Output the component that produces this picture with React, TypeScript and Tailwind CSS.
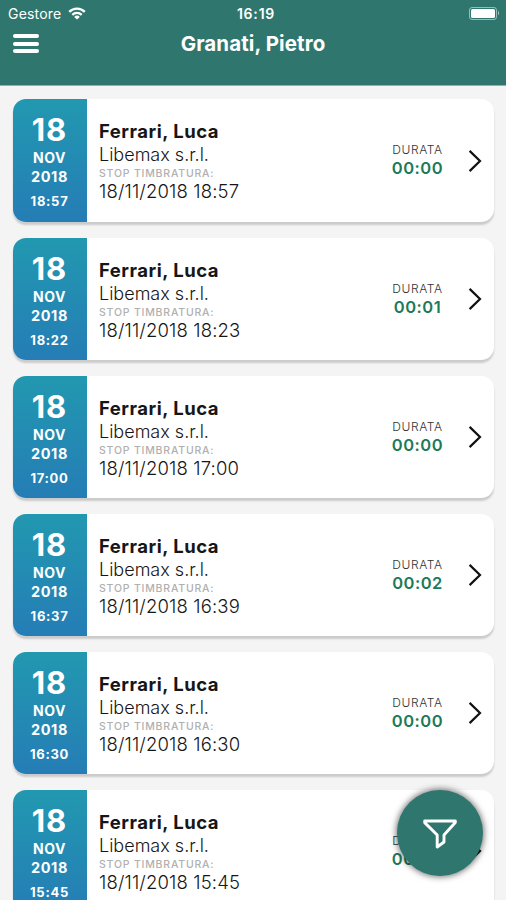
type Stamp = {
  day: string;
  month: string;
  year: string;
  start: string;
  name: string;
  company: string;
  stop: string;
  duration: string;
};

const base = {
  day: "18",
  month: "NOV",
  year: "2018",
  name: "Ferrari, Luca",
  company: "Libemax s.r.l."
};

const stamps: Stamp[] = [
  { ...base, start: "18:57", stop: "18/11/2018 18:57", duration: "00:00" },
  { ...base, start: "18:22", stop: "18/11/2018 18:23", duration: "00:01" },
  { ...base, start: "17:00", stop: "18/11/2018 17:00", duration: "00:00" },
  { ...base, start: "16:37", stop: "18/11/2018 16:39", duration: "00:02" },
  { ...base, start: "16:30", stop: "18/11/2018 16:30", duration: "00:00" },
  { ...base, start: "15:45", stop: "18/11/2018 15:45", duration: "00:00" }
];

function WifiIcon() {
  return (
    <svg width="18" height="13" viewBox="0 0 18 13" fill="none" stroke="white" strokeWidth="2.3">
      <path d="M1.2 4.9a11 11 0 0 1 15.6 0" />
      <path d="M4.3 7.9a6.7 6.7 0 0 1 9.4 0" />
      <path d="M9 12.6 6.2 9.9a4 4 0 0 1 5.6 0Z" fill="white" stroke="none" />
    </svg>
  );
}

function Battery() {
  return (
    <div className="flex items-center gap-px">
      <div className="h-[13px] w-[28px] rounded-[3px] border border-white/50 p-px">
        <div className="h-full w-full rounded-[1.5px] bg-white" />
      </div>
      <div className="h-1 w-[1.5px] rounded-r bg-white/50" />
    </div>
  );
}

function Header() {
  return (
    <header className="h-[86px] shrink-0 border-b border-[#8fb0ab] bg-[#2f776e] text-white">
      <div className="grid h-[26px] grid-cols-3 items-center px-[7px]">
        <div className="flex items-center gap-[7px] pl-px">
          <span className="text-[14px] tracking-[0.2px]">Gestore</span>
          <WifiIcon />
        </div>
        <span className="pl-[6px] text-center text-[14px] font-semibold tracking-[0.8px]">16:19</span>
        <div className="flex justify-end">
          <Battery />
        </div>
      </div>
      <div className="grid h-[36px] grid-cols-[40px_1fr_40px] items-center px-[13px]">
        <button aria-label="Menu" className="-mt-px flex w-[26px] flex-col gap-[3.5px]">
          <span className="h-1 rounded-full bg-white" />
          <span className="h-1 rounded-full bg-white" />
          <span className="h-1 rounded-full bg-white" />
        </button>
        <h1 className="text-center text-[20.5px] font-bold tracking-[0.1px]">Granati, Pietro</h1>
      </div>
    </header>
  );
}

function StampCard({ stamp }: { stamp: Stamp }) {
  return (
    <article className="flex h-[122.3px] shrink-0 overflow-hidden rounded-[13px] bg-white shadow-[0_3px_2px_rgba(0,0,0,0.17)]">
      <div className="flex w-[74px] flex-col items-center bg-gradient-to-b from-[#2298b0] to-[#257db5] pt-[16px] pr-px font-bold text-white">
        <span className="text-[31px] leading-[30px] tracking-[1px]">{stamp.day}</span>
        <span className="mt-[3px] text-[14px] leading-[19px] tracking-[0.6px]">{stamp.month}</span>
        <span className="text-[14.5px] leading-[20px] tracking-[0.6px]">{stamp.year}</span>
        <span className="mt-[5px] text-[13px] leading-[18px] tracking-[0.7px]">{stamp.start}</span>
      </div>

      <div className="flex flex-1 flex-col pt-[20px] pl-3 text-[#161616]">
        <h2 className="text-[18.5px] leading-[24px] font-bold tracking-[0.5px]">{stamp.name}</h2>
        <p className="text-[18px] leading-[23px] font-light">{stamp.company}</p>
        <span className="text-[10.5px] leading-[15px] font-medium tracking-[0.8px] text-[#b0b0b0]">
          STOP TIMBRATURA:
        </span>
        <p className="-mt-px text-[18.5px] leading-[22px] font-light tracking-[0.15px]">{stamp.stop}</p>
      </div>

      <div className="flex w-[60px] flex-col items-center pt-[43px] pr-px">
        <span className="text-[12px] leading-[16px] font-light tracking-[0.6px] text-[#333]">DURATA</span>
        <span className="text-[16.5px] leading-[21px] font-semibold tracking-[0.5px] text-[#1c7a58]">
          {stamp.duration}
        </span>
      </div>

      <div className="flex w-[46px] items-center pl-[20px]">
        <svg width="15" height="24" viewBox="0 0 15 24" fill="none" stroke="#111" strokeWidth="2.2">
          <path d="M1.6 1.9 12 12 1.6 22.1" />
        </svg>
      </div>
    </article>
  );
}

function FilterButton() {
  return (
    <button
      aria-label="Filter"
      className="absolute top-[790px] left-[397px] flex h-[86px] w-[86px] items-center justify-center rounded-full bg-[#2f776e] pt-[2px] shadow-[0_0_6px_1px_rgba(0,0,0,0.55)]"
    >
      <svg width="34" height="30" viewBox="0 0 34 30" fill="none" stroke="white" strokeWidth="2.9">
        <path d="M1.7 2h30.6v1.6L21 16v7L14.2 28V16L1.7 3.6Z" strokeLinejoin="round" />
      </svg>
    </button>
  );
}

export default function App() {
  return (
    <div className="relative flex h-[900px] w-[506px] flex-col overflow-hidden bg-[#f4f4f4] font-['Inter',sans-serif]">
      <Header />
      <main className="flex min-h-0 flex-1 flex-col gap-[15.9px] overflow-hidden pt-[13.4px] pr-3 pl-[13px]">
        {stamps.map((stamp) => (
          <StampCard key={stamp.start} stamp={stamp} />
        ))}
      </main>
      <FilterButton />
    </div>
  );
}
